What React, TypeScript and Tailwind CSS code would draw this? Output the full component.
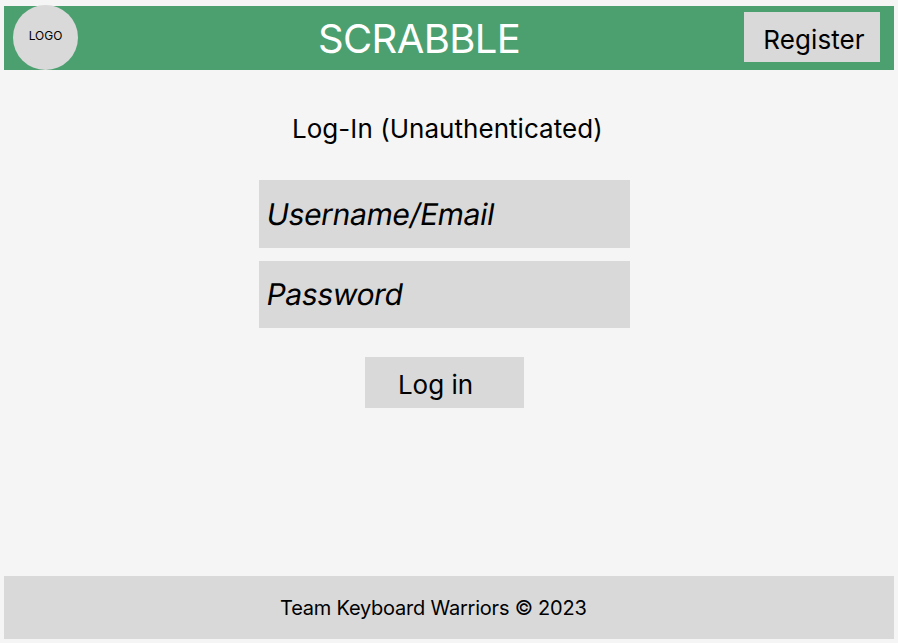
export default function App() {
  return (
    <div className="flex h-[643px] w-[898px] flex-col bg-[#f5f5f5] pt-[6px] pr-[4px] pb-[4px] pl-[4px] font-['Inter',sans-serif] text-black">
      <header className="flex h-[64px] shrink-0 items-start bg-[#4ca070]">
        <div className="-mt-px ml-[9px] flex h-[65px] w-[65px] items-center justify-center rounded-full bg-[#d9d9d9] pb-[4px] text-[12px] leading-none">LOGO</div>
        <h1 className="ml-[240px] w-[426px] pt-[9px] text-[40px] leading-[48px] tracking-[-0.64px] whitespace-nowrap text-white">SCRABBLE</h1>
        <button className="mt-[6px] h-[50px] w-[136px] bg-[#d9d9d9] pt-[6px] pl-[4px] text-[26px] leading-[32px] tracking-[0.08px]">Register</button>
      </header>
      <main className="flex flex-1 flex-col pl-[255px]">
        <h2 className="mt-[43px] ml-[33px] text-[26px] leading-[32px] tracking-[0.04px] whitespace-nowrap">Log-In (Unauthenticated)</h2>
        <div className="mt-[35px] flex h-[68px] w-[371px] items-center bg-[#d9d9d9] pl-[8px] text-[30px] tracking-[-0.35px]">
          <span className="-skew-x-[9.4deg]">Username/Email</span>
        </div>
        <div className="mt-[13px] flex h-[67px] w-[371px] items-center bg-[#d9d9d9] pl-[8px] text-[30px] tracking-[-0.35px]">
          <span className="-skew-x-[9.4deg]">Password</span>
        </div>
        <button className="mt-[29px] ml-[106px] h-[51px] w-[159px] bg-[#d9d9d9] pt-[5px] pr-[18px] text-[26px] leading-[32px]">Log in</button>
      </main>
      <footer className="h-[63px] shrink-0 bg-[#d9d9d9] pt-[20px] pl-[276px] text-[20px] leading-[24px] tracking-[-0.22px]">Team Keyboard Warriors © 2023</footer>
    </div>
  );
}
